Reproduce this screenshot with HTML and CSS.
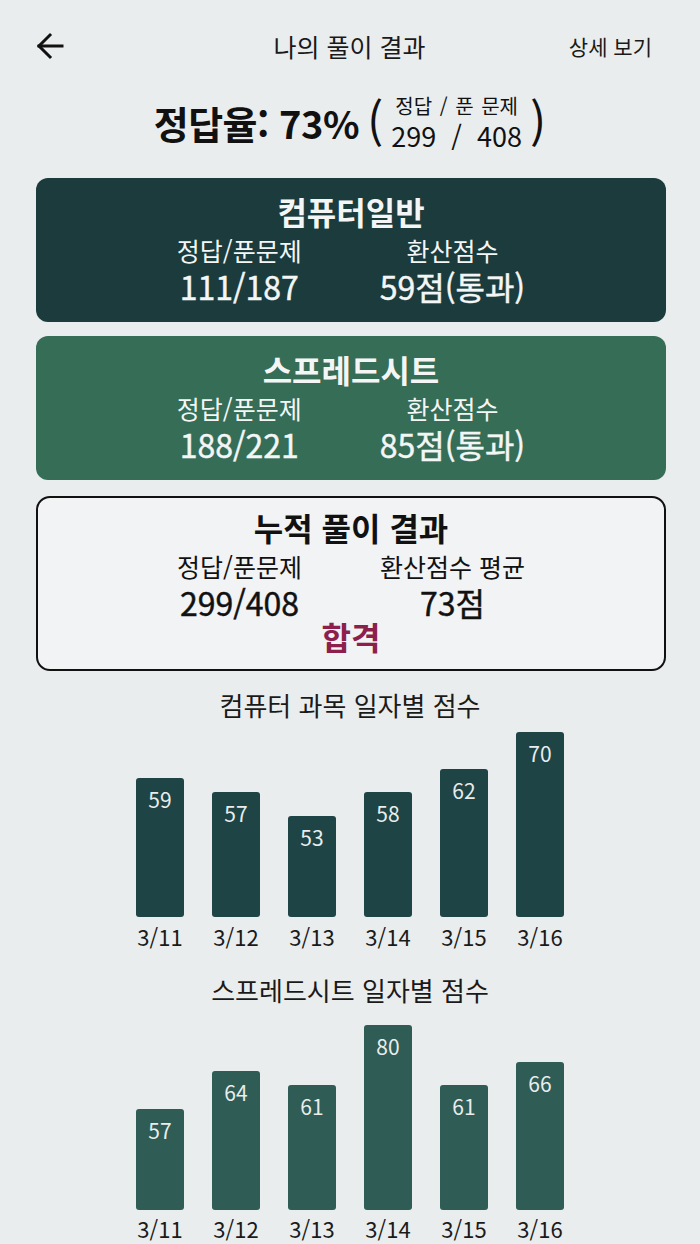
FILE: index.html
```html
<!DOCTYPE html>
<html lang="ko">
<head>
<meta charset="utf-8">
<title>나의 풀이 결과</title>
<link rel="stylesheet" href="styles.css">
</head>
<body>
<div class="page">
  <header class="topbar">
    <div class="back">
      <svg width="30" height="30" viewBox="0 0 30 30" fill="none" stroke="#111" stroke-width="3" stroke-linecap="square" stroke-linejoin="miter">
        <path d="M4 15 H27"/>
        <path d="M15 4 L4 15 L15 26"/>
      </svg>
    </div>
    <div class="title">나의 풀이 결과</div>
    <div class="detail">상세 보기</div>
  </header>

  <section class="summary">
    <span class="rate">정답율: 73%</span>
    <span class="paren">(</span>
    <span class="stack">
      <span class="stack-top">정답 / 푼 문제</span>
      <span class="stack-bottom">299&nbsp; /&nbsp; 408</span>
    </span>
    <span class="paren">)</span>
  </section>

  <section class="card card-dark">
    <div class="card-title">컴퓨터일반</div>
    <div class="cols">
      <div class="col">
        <div class="label">정답/푼문제</div>
        <div class="value">111/187</div>
      </div>
      <div class="col">
        <div class="label">환산점수</div>
        <div class="value">59점(통과)</div>
      </div>
    </div>
  </section>

  <section class="card card-green">
    <div class="card-title">스프레드시트</div>
    <div class="cols">
      <div class="col">
        <div class="label">정답/푼문제</div>
        <div class="value">188/221</div>
      </div>
      <div class="col">
        <div class="label">환산점수</div>
        <div class="value">85점(통과)</div>
      </div>
    </div>
  </section>

  <section class="card card-total">
    <div class="card-title">누적 풀이 결과</div>
    <div class="cols">
      <div class="col">
        <div class="label">정답/푼문제</div>
        <div class="value">299/408</div>
      </div>
      <div class="col">
        <div class="label">환산점수 평균</div>
        <div class="value">73점</div>
      </div>
    </div>
    <div class="pass">합격</div>
  </section>

  <section class="chart chart-1">
    <div class="chart-title">컴퓨터 과목 일자별 점수</div>
    <div class="bars">
      <div class="bar-col"><div class="bar" style="height:139px"><span>59</span></div><div class="date">3/11</div></div>
      <div class="bar-col"><div class="bar" style="height:125px"><span>57</span></div><div class="date">3/12</div></div>
      <div class="bar-col"><div class="bar" style="height:101px"><span>53</span></div><div class="date">3/13</div></div>
      <div class="bar-col"><div class="bar" style="height:125px"><span>58</span></div><div class="date">3/14</div></div>
      <div class="bar-col"><div class="bar" style="height:148px"><span>62</span></div><div class="date">3/15</div></div>
      <div class="bar-col"><div class="bar" style="height:185px"><span>70</span></div><div class="date">3/16</div></div>
    </div>
  </section>

  <section class="chart chart-2">
    <div class="chart-title">스프레드시트 일자별 점수</div>
    <div class="bars">
      <div class="bar-col"><div class="bar" style="height:101px"><span>57</span></div><div class="date">3/11</div></div>
      <div class="bar-col"><div class="bar" style="height:139px"><span>64</span></div><div class="date">3/12</div></div>
      <div class="bar-col"><div class="bar" style="height:125px"><span>61</span></div><div class="date">3/13</div></div>
      <div class="bar-col"><div class="bar" style="height:185px"><span>80</span></div><div class="date">3/14</div></div>
      <div class="bar-col"><div class="bar" style="height:125px"><span>61</span></div><div class="date">3/15</div></div>
      <div class="bar-col"><div class="bar" style="height:148px"><span>66</span></div><div class="date">3/16</div></div>
    </div>
  </section>
</div>
</body>
</html>
```

FILE: styles.css
```css
html, body {
  margin: 0;
  padding: 0;
}
body {
  background: #eaedee;
  font-family: "Noto Sans CJK KR", "Noto Sans", sans-serif;
  color: #111;
}
.page {
  width: 700px;
  height: 1244px;
  overflow: hidden;
}

/* header */
.topbar {
  height: 92px;
  display: grid;
  grid-template-columns: 1fr auto 1fr;
  align-items: center;
  padding: 0 36px 0 35px;
}
.back {
  display: flex;
  align-items: center;
  height: 30px;
}
.title {
  font-size: 25px;
  line-height: 34px;
  color: #1a1a1a;
}
.detail {
  justify-self: end;
  margin-right: 12px;
  font-size: 21px;
  line-height: 30px;
  color: #1a1a1a;
}

/* summary */
.summary {
  height: 62px;
  margin-bottom: 24px;
  display: flex;
  justify-content: center;
  align-items: center;
}
.rate {
  font-size: 38px;
  font-weight: 700;
  line-height: 46px;
  letter-spacing: -0.5px;
}
.paren {
  font-size: 48px;
  line-height: 56px;
  font-weight: 400;
  margin: 0 8px 0 8px;
  position: relative;
  top: -3px;
}
.paren:last-child {
  margin: 0 0 0 8px;
}
.stack {
  display: flex;
  flex-direction: column;
  align-items: center;
}
.stack-top {
  font-size: 20px;
  line-height: 26px;
  word-spacing: 2px;
}
.stack-bottom {
  font-size: 27px;
  line-height: 34px;
}

/* cards */
.card {
  margin: 0 34px 14px 36px;
  border-radius: 12px;
  text-align: center;
  padding: 13px 0 19px;
}
.card-dark {
  background: #1b3b3d;
  color: #f4f6f6;
}
.card-green {
  background: #356d57;
  color: #f4f6f6;
  margin-bottom: 16px;
}
.card-total {
  background: #f1f3f4;
  border: 2px solid #111;
  border-radius: 14px;
  padding: 9px 0 16px;
  color: #111;
}
.card-title {
  font-size: 32px;
  font-weight: 700;
  line-height: 40px;
}
.cols {
  display: flex;
  justify-content: center;
  gap: 78px;
}
.col {
  display: flex;
  flex-direction: column;
  align-items: center;
}
.label {
  font-size: 25px;
  line-height: 38px;
}
.value {
  font-size: 32px;
  font-weight: 400;
  line-height: 34px;
  -webkit-text-stroke: 0.45px currentColor;
}
.pass {
  font-size: 32px;
  font-weight: 700;
  line-height: 34px;
  color: #8c1f4b;
}

/* charts */
.chart {
  display: flex;
  flex-direction: column;
  align-items: center;
}
.chart-1 {
  margin-top: 17px;
}
.chart-2 {
  margin-top: 22px;
}
.chart-title {
  font-size: 26px;
  line-height: 34px;
  color: #1a1a1a;
}
.bars {
  display: flex;
  align-items: flex-end;
  gap: 28px;
}
.chart-1 .bars {
  height: 229px;
}
.chart-2 .bars {
  height: 236px;
}
.bar-col {
  width: 48px;
  display: flex;
  flex-direction: column;
  align-items: center;
}
.bar {
  width: 48px;
  border-radius: 3px;
  display: flex;
  justify-content: center;
  box-sizing: border-box;
  padding-top: 9px;
}
.chart-1 .bar {
  background: #1e4446;
}
.chart-2 .bar {
  background: #2f5c55;
}
.bar span {
  font-size: 21px;
  line-height: 24px;
  color: #e9eded;
}
.date {
  font-size: 22px;
  line-height: 30px;
  margin-top: 4px;
  white-space: nowrap;
  color: #1a1a1a;
}
.chart-2 .date {
  margin-top: 3px;
}
```
